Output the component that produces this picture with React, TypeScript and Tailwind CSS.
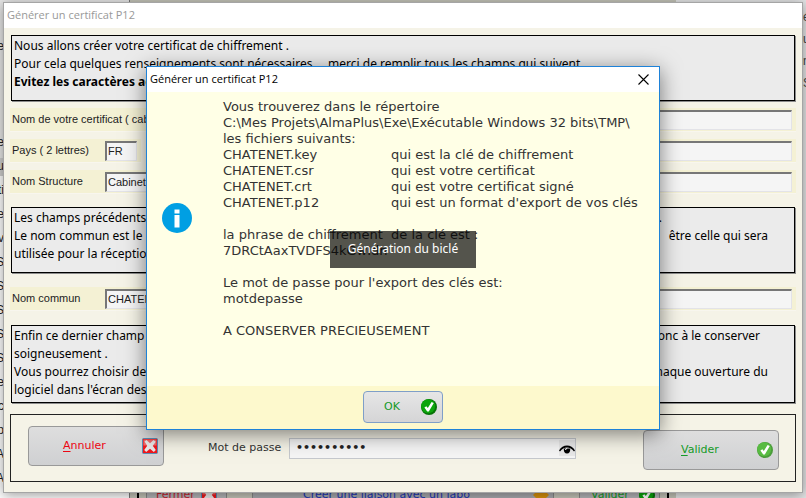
import { useState, ReactNode } from "react";
import { clsx } from "clsx";

const leftRows = [
  "Cabine",
  "",
  "",
  "",
  "Liste",
  "Menu",
  "Acti",
  "Sale",
  "Archiv",
  "DOSS",
  "DOSS",
  "DOSS",
  "DOSS",
  "DOSS",
  "Type",
  "Doc",
  "Grp",
  "GA",
  "GA",
];

const rightRows = ["état", "utile", "nom", "Suivi"];

const files = [
  { name: "CHATENET.key", label: "qui est la clé de chiffrement" },
  { name: "CHATENET.csr", label: "qui est votre certificat" },
  { name: "CHATENET.crt", label: "qui est votre certificat signé" },
  { name: "CHATENET.p12", label: "qui est un format d'export de vos clés" },
];

function CheckIcon({ light = false, className = "" }: { light?: boolean; className?: string }) {
  return (
    <svg viewBox="0 0 16 16" className={clsx("size-4 shrink-0", className)} aria-hidden="true">
      <circle cx="8" cy="8" r="8" fill={light ? "#4a9c3a" : "#077307"} />
      <circle cx="7.2" cy="7.2" r="7" fill={light ? "#58bb42" : "#0ca50c"} />
      <path d="M3.4 8.6 5.4 7.2 6.8 9 10.6 3 12.8 4 7.8 12.4 6.2 12.4Z" fill="#fff" />
    </svg>
  );
}

function CrossIcon() {
  return (
    <svg viewBox="0 0 16 16" className="size-4 shrink-0" aria-hidden="true">
      <rect x="0.5" y="0.5" width="15" height="15" rx="1" fill="#f0181c" stroke="#5b8fb8" />
      <rect x="1.5" y="1.5" width="13" height="6" fill="#f2686a" />
      <path
        d="M2.5 3.5 4.5 2 8 5.2 11.5 2 13.8 3.8 10.8 7.8 13.8 12 11.8 14 8 10.8 4.2 14 2.2 12 5.2 7.8Z"
        fill="#e9e9e9"
      />
    </svg>
  );
}

function EyeIcon() {
  return (
    <svg viewBox="0 0 16 12" className="h-3 w-4" aria-hidden="true">
      <path d="M0 8.4Q3 3.4 8 3.4T16 8.4L15 9.6Q12 5.6 8 5.6T1 9.6Z" fill="#000" />
      <path d="M4.8 6.4H11.2Q11.4 11.4 8 11.4T4.8 6.4Z" fill="#000" />
      <path d="M6.4 8A2 2 0 0 1 8.2 6.4" fill="none" stroke="#fff" strokeWidth="1" />
    </svg>
  );
}

function InfoIcon() {
  return (
    <svg viewBox="0 0 30 30" className="size-[30px] shrink-0" aria-hidden="true">
      <circle cx="15" cy="15" r="15" fill="#009fe3" />
      <rect x="12.5" y="6.5" width="5" height="4" fill="#fff" />
      <rect x="12.5" y="12" width="5" height="12.5" fill="#fff" />
    </svg>
  );
}

function InfoBox({ children, className }: { children: ReactNode; className?: string }) {
  return (
    <div
      className={clsx(
        "mx-px border border-black bg-[#ebebeb] px-[2px] py-px text-[12px] leading-[18px] text-black shadow-[1px_1px_0_#8c8c8c]",
        "font-['Noto_Sans',sans-serif]",
        className,
      )}
    >
      {children}
    </div>
  );
}

function SplitLine({ start, end }: { start: string; end?: string }) {
  return (
    <p className="flex justify-between whitespace-nowrap">
      <span>{start}</span>
      {end && <span>{end}</span>}
    </p>
  );
}

interface FieldProps {
  id: string;
  label: string;
  value: string;
  className?: string;
  labelClassName?: string;
}

function Field({ id, label, value, className, labelClassName = "w-[93px]" }: FieldProps) {
  return (
    <div
      className={clsx(
        "flex h-6 items-center border-b border-[#f8f6ee] bg-[#f4f1d4] pr-1 pl-[2px] font-['Liberation_Sans',sans-serif]",
        className,
      )}
    >
      <label htmlFor={id} className={clsx("shrink-0 whitespace-nowrap text-[11px] text-[#222]", labelClassName)}>
        {label}
      </label>
      <input
        id={id}
        defaultValue={value}
        className="h-5 w-full min-w-0 flex-1 border-t-2 border-r border-b border-l-2 border-t-[#777] border-r-[#e3e3e8] border-b-[#e3e3e8] border-l-[#777] bg-[#f5f5f5] px-px text-[11px] text-[#222] outline-none"
      />
    </div>
  );
}

function BackgroundWindows() {
  return (
    <div className="absolute inset-0 overflow-hidden bg-[#e4e5e6]" aria-hidden="true">
      <div className="absolute inset-y-0 left-0 flex w-[130px] flex-col border-r border-[#777] bg-white">
        <div className="h-[158px] bg-[#e7e7e7]" />
        <div className="h-[18px] bg-[#cfcfcf]" />
      </div>
      <ul className="absolute top-[34px] left-0 flex w-1 flex-col items-end font-['Liberation_Sans',sans-serif] text-[12px] leading-6 text-[#222]">
        {leftRows.map((row, i) => (
          <li key={i} className="h-6 whitespace-nowrap">
            {row}
          </li>
        ))}
      </ul>
      <ul className="absolute top-[6px] right-0 w-[3px] font-['Liberation_Sans',sans-serif] text-[12px] leading-[22px] text-[#444]">
        {rightRows.map((row) => (
          <li key={row} className="whitespace-nowrap">
            {row}
          </li>
        ))}
      </ul>
      <div className="absolute inset-x-[130px] inset-y-0 bg-[#c4c4b8]">
        <div className="absolute inset-x-[7px] top-[480px] flex gap-[25px] border-x-2 border-black px-[7px] font-['DejaVu_Sans',sans-serif] text-[11px]">
          <div className="flex h-8 w-[81px] justify-between rounded border border-[#888] bg-[#b4b5b8] px-[9px] pt-[6px] text-[#c81e2d]">
            <span>Fermer</span>
            <CrossIcon />
          </div>
          <div className="flex h-8 flex-1 justify-between rounded border border-[#888] bg-[#a9aaae] pt-[6px] pr-1 pl-[50px] text-[#1c35b5]">
            <span>Créer une liaison avec un labo</span>
            <svg viewBox="0 0 16 16" className="size-4">
              <path d="M0 8 8 0 16 8 8 16Z" fill="#d8920c" />
            </svg>
          </div>
          <div className="flex h-8 w-[81px] justify-between rounded border border-[#888] bg-[#b4b5b8] pt-[6px] pr-1 pl-[11px] text-[#159a28]">
            <span>Valider</span>
            <CheckIcon />
          </div>
        </div>
      </div>
    </div>
  );
}

function CertificateWindow() {
  const [password, setPassword] = useState("motdepasse");
  const [visible, setVisible] = useState(false);

  return (
    <section className="absolute inset-x-[3px] top-[2px] border border-[#a5a5a5] bg-[#f5f3e7] pb-[10px] shadow-[0_2px_12px_rgba(0,0,0,0.4)]">
      <h1 className="flex h-[25px] items-center bg-white px-[3px] font-['Open_Sans',sans-serif] text-[11px] text-[#999]">
        Générer un certificat P12
      </h1>
      <div className="px-[6px] pt-[7px]">
        <InfoBox className="h-[66px]">
          <p>Nous allons créer votre certificat de chiffrement .</p>
          <p>Pour cela quelques renseignements sont nécessaires&nbsp;&nbsp; , merci de remplir tous les champs qui suivent.</p>
          <p className="font-bold">Evitez les caractères accentués</p>
        </InfoBox>

        <form className="mt-[7px] flex flex-col gap-[7px]">
          <Field
            id="nom"
            label="Nom de votre certificat ( cabinet, structure )"
            value=""
            labelClassName="w-[250px]"
          />
          <div className="flex gap-6">
            <Field id="pays" label="Pays ( 2 lettres)" value="FR" className="w-[131px]" />
            <Field id="ville" label="Ville" value="" className="flex-1" />
          </div>
          <Field id="structure" label="Nom Structure" value="Cabinet" />
        </form>

        <InfoBox className="mt-[13px] h-[66px]">
          <div className="pr-[130px]">
            <SplitLine start="Les champs précédents sont" end="obligatoires ." />
          </div>
          <div className="pr-6">
            <SplitLine start="Le nom commun est le" end="être celle qui sera" />
          </div>
          <SplitLine start="utilisée pour la réception" />
        </InfoBox>

        <Field id="commun" label="Nom commun" value="CHATENET" className="mt-[14px]" />

        <InfoBox className="mt-[14px] h-[78px]">
          <div className="pr-8">
            <SplitLine start="Enfin ce dernier champ" end="donc à le conserver" />
          </div>
          <SplitLine start="soigneusement ." />
          <div className="pr-6">
            <SplitLine start="Vous pourrez choisir de" end="à chaque ouverture du" />
          </div>
          <SplitLine start="logiciel dans l'écran des" />
        </InfoBox>

        <div className="mt-[11px] flex h-[68px] items-center border border-[#222] pr-4 pl-[17px] font-['DejaVu_Sans',sans-serif] text-[11px]">
          <button
            type="button"
            className="mb-1 flex h-10 w-[136px] items-center justify-between rounded border border-[#999] bg-linear-to-b from-[#dedede] to-[#cfd0d2] pr-[5px] pl-[34px] text-[#ec0613]"
          >
            <span>
              <u className="underline-offset-2">A</u>nnuler
            </span>
            <CrossIcon />
          </button>
          <label htmlFor="password" className="ml-11 w-[81px] whitespace-nowrap text-[#333]">
            Mot de passe
          </label>
          <div className="flex h-[21px] w-[287px] items-center border border-[#c5c8cd] bg-[#f5f5f5]">
            <input
              id="password"
              type={visible ? "text" : "password"}
              value={password}
              onChange={(e) => setPassword(e.target.value)}
              className="min-w-0 flex-1 bg-transparent px-[6px] font-bold text-[11px] text-[#222] outline-none"
            />
            <button
              type="button"
              aria-label="Afficher le mot de passe"
              onClick={() => setVisible(!visible)}
              className="flex h-4 items-center bg-[#e8e8e8]"
            >
              <EyeIcon />
            </button>
          </div>
          <button
            type="button"
            className="mt-1 ml-auto flex h-10 w-[136px] items-center justify-between rounded border border-[#999] bg-linear-to-b from-[#dedede] to-[#cfd0d2] pr-[5px] pl-[37px] text-[#159a28]"
          >
            <span>
              <u className="underline-offset-2">V</u>alider
            </span>
            <CheckIcon light />
          </button>
        </div>
      </div>
    </section>
  );
}

function ResultDialog() {
  return (
    <div
      role="dialog"
      aria-labelledby="dialog-title"
      className="w-[514px] border border-[#1e82d8] bg-[#ffffe6] shadow-[0_4px_20px_rgba(0,0,0,0.5)]"
    >
      <div className="flex h-[25px] items-center justify-between bg-white pr-[10px] pl-[3px]">
        <h2 id="dialog-title" className="font-['Open_Sans',sans-serif] text-[11px] text-black">
          Générer un certificat P12
        </h2>
        <button type="button" aria-label="Fermer">
          <svg viewBox="0 0 11 11" className="size-[11px]">
            <path d="M0.5 0.5 10.5 10.5M10.5 0.5 0.5 10.5" stroke="#000" strokeWidth="1.1" />
          </svg>
        </button>
      </div>
      <div className="flex h-[294px] items-start gap-[31px] pt-[7px] pl-[15px]">
        <div className="pt-[104px]">
          <InfoIcon />
        </div>
        <div className="whitespace-nowrap font-['DejaVu_Sans',sans-serif] text-[13px] leading-4 text-[#333]">
          <p>Vous trouverez dans le répertoire</p>
          <p>C:\Mes Projets\AlmaPlus\Exe\Exécutable Windows 32 bits\TMP\</p>
          <p>les fichiers suivants:</p>
          <dl className="grid grid-cols-[168px_auto]">
            {files.map((file) => (
              <div key={file.name} className="contents">
                <dt>{file.name}</dt>
                <dd>{file.label}</dd>
              </div>
            ))}
          </dl>
          <p className="mt-4">la phrase de chiffrement&nbsp; de la clé est :</p>
          <p>7DRCtAaxTVDFS4kGwIdn</p>
          <p className="mt-4">Le mot de passe pour l'export des clés est:</p>
          <p>motdepasse</p>
          <p className="mt-4">A CONSERVER PRECIEUSEMENT</p>
        </div>
      </div>
      <div className="flex h-[43px] justify-center bg-[#fdf9cd] pt-[5px]">
        <button
          type="button"
          className="flex h-8 w-20 items-center justify-between rounded border border-[#7f9fc8] bg-linear-to-b from-[#e6e6e6] to-[#d5d5d6] pr-[5px] pl-5 font-['DejaVu_Sans',sans-serif] text-[11px] text-[#159a28]"
        >
          OK
          <CheckIcon />
        </button>
      </div>
    </div>
  );
}

export default function App() {
  return (
    <main className="relative min-h-screen overflow-hidden">
      <BackgroundWindows />
      <CertificateWindow />
      <div className="absolute inset-x-0 top-[66px] flex justify-center">
        <ResultDialog />
      </div>
      <div className="absolute inset-x-0 top-[231px] flex justify-center">
        <div
          role="status"
          className="flex h-[37px] w-[146px] justify-center bg-black/67 pt-[9px] font-['Noto_Sans',sans-serif] text-[12px] leading-[18px] text-white"
        >
          Génération du biclé
        </div>
      </div>
    </main>
  );
}
